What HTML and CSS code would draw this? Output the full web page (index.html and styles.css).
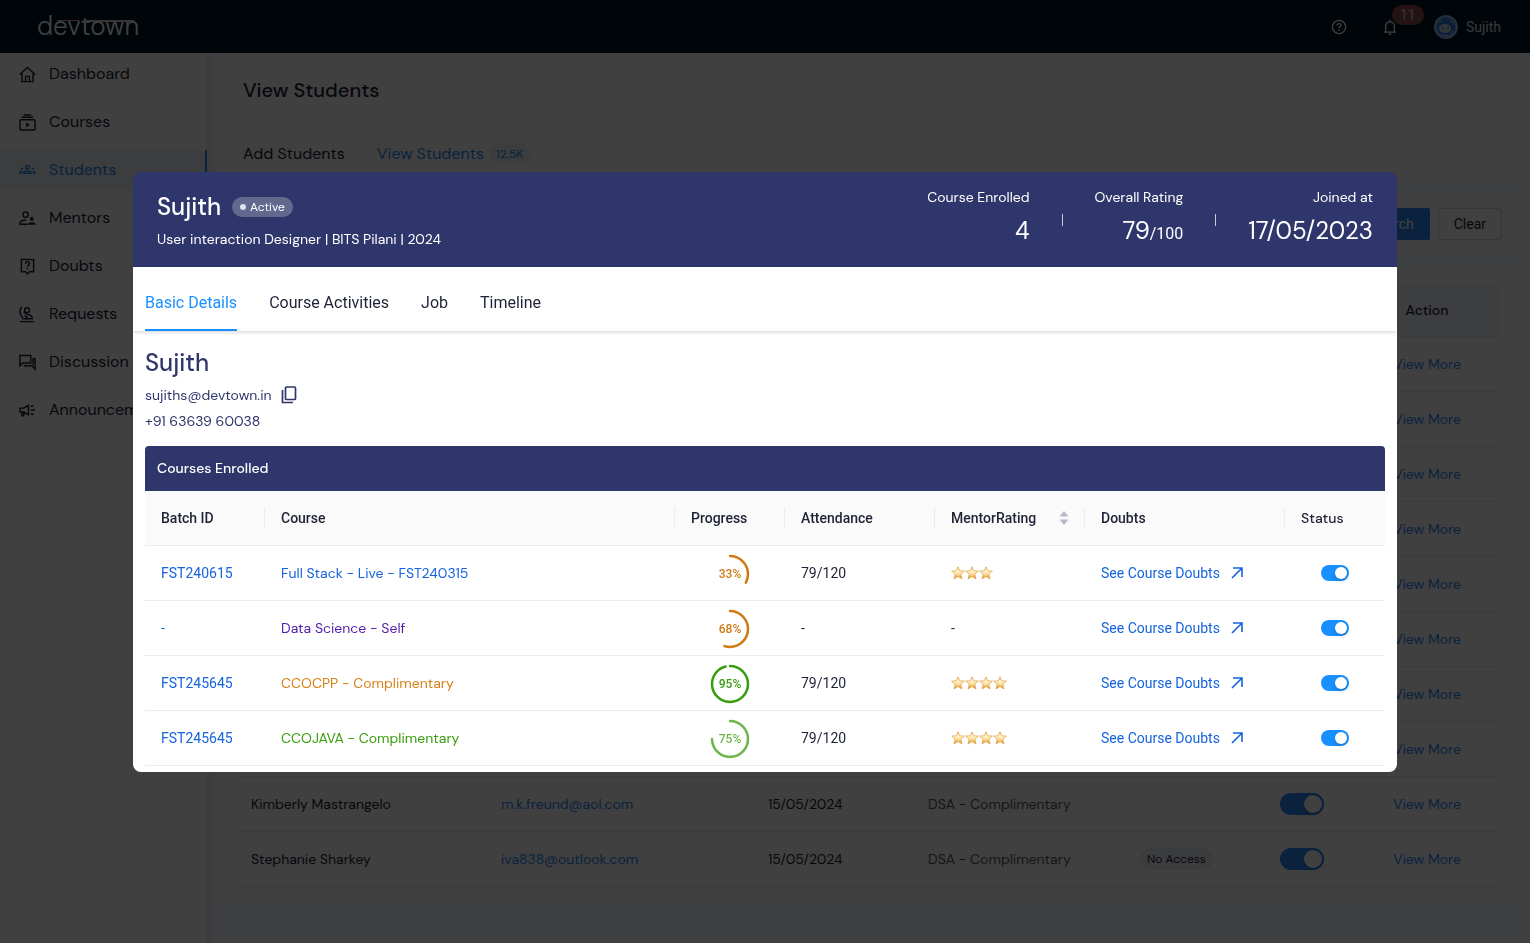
FILE: index.html
```html
<!DOCTYPE html>
<html lang="en">
<head>
    <meta charset="UTF-8" />
    <meta name="viewport" content="width=device-width, initial-scale=1.0" />
    <title>Devtown - View Students</title>
    <link rel="stylesheet" href="styles.css">
</head>
<body>
    <svg class="defs" width="0" height="0" aria-hidden="true">
        <defs>
            <linearGradient id="gold" x1="0" y1="0" x2="0" y2="1">
                <stop offset="0" stop-color="#f0b24a" />
                <stop offset="0.3" stop-color="#fff6dc" />
                <stop offset="0.6" stop-color="#fbdf98" />
                <stop offset="1" stop-color="#d98a25" />
            </linearGradient>
            <symbol id="star" viewBox="0 0 14 14">
                <path d="M7 .8l1.700 4 4.700.3-3.600 3 1.200 4.900L7 10.400 3 13l1.200-4.900-3.600-3 4.700-.3z" fill="url(#gold)" stroke="#e0a040" stroke-width=".7" stroke-linejoin="round" />
            </symbol>
            <symbol id="arrow" viewBox="0 0 12 12">
                <path d="M2 1h9v9M11 1L1 11" fill="none" stroke="currentColor" stroke-width="1.600" />
            </symbol>
        </defs>
    </svg>

    <header class="header">
        <a href="#" class="logo">devtown</a>
        <div class="header-right">
            <button type="button" class="icon-btn" aria-label="Help">
                <svg width="16" height="16" viewBox="0 0 16 16" fill="none" stroke="currentColor" stroke-width="1.300"><circle cx="8" cy="8" r="6.600" /><path d="M6 6.500c0-2.600 4-2.600 4 0 0 1.400-2 1.400-2 2.800M8 10.600v1.300" /></svg>
            </button>
            <button type="button" class="icon-btn bell" aria-label="Notifications">
                <svg width="16" height="16" viewBox="0 0 16 16" fill="none" stroke="currentColor" stroke-width="1.300"><path d="M2 13.200h12M3.700 13V7c0-5.500 8.600-5.500 8.600 0v6M8 2.800V.8M6.700 14.500c.5 1 2.100 1 2.600 0" /></svg>
                <span class="count">11</span>
            </button>
            <a href="#" class="user">
                <svg width="24" height="24" viewBox="0 0 24 24"><circle cx="12" cy="12" r="12" fill="#8fb4e6" /><circle cx="12" cy="12" r="9.500" fill="#2f7fe0" /><path d="M5 7l2-1M16 5l3 3M9 20l6 1M19 16l-2 3" stroke="#cfe2fa" /><ellipse cx="11" cy="13.500" rx="6" ry="4.500" fill="#c3d3e8" /><path d="M8 13h2M13 13h2" stroke="#456" /></svg>
                <span>Sujith</span>
            </a>
        </div>
    </header>

    <div class="layout">
        <nav class="sidebar">
            <a href="#" class="nav-item">
                <svg viewBox="0 0 18 18"><path d="M.8 9L9 1.500 17.200 9M3.200 8v8.500h11.600V8M7 16.500V11h4v5.500" /></svg>
                <span>Dashboard</span>
            </a>
            <a href="#" class="nav-item">
                <svg viewBox="0 0 18 18"><rect x="1" y="6" width="16" height="11" rx="1" /><path d="M3 3.500h12M5 1h8" /><path d="M7.500 9v5l4-2.500z" class="solid" /></svg>
                <span>Courses</span>
            </a>
            <a href="#" class="nav-item active">
                <svg viewBox="0 0 18 18"><circle cx="9" cy="5.500" r="1.900" /><path d="M5 12c0-3 8-3 8 0z" /><circle cx="3.300" cy="7" r="1.300" class="solid" /><circle cx="14.700" cy="7" r="1.300" class="solid" /><path d="M0 12.500c0-2.500 1.500-3 3.500-2.800L3 12.500zM18 12.500c0-2.500-1.500-3-3.500-2.800l.5 2.800z" class="solid" /></svg>
                <span>Students</span>
            </a>
            <a href="#" class="nav-item">
                <svg viewBox="0 0 18 18"><circle cx="7" cy="5" r="2.800" /><path d="M9 15H1v-1c0-2 3-3.500 6.500-3.500" /><circle cx="13.500" cy="9.500" r="2" class="solid" /><path d="M9.500 15.500c0-3.500 8-3.500 8 0z" class="solid" /></svg>
                <span>Mentors</span>
            </a>
            <a href="#" class="nav-item">
                <svg viewBox="0 0 18 18"><path d="M2.500 1.500h13v13H11L9 16.800l-2-2.300H2.500z" /><path d="M7 6c0-2.600 4-2.600 4 0 0 1.500-2 1.500-2 3.200M9 10.600v1.600" /></svg>
                <span>Doubts</span>
            </a>
            <a href="#" class="nav-item">
                <svg viewBox="0 0 18 18"><circle cx="8.500" cy="4.500" r="2.600" /><path d="M3 1C0 4 1 9 4.500 13.500H14c0-3-2-4.500-5.500-4.500L5 6M6 10l4 3.500M1 16.500h15" /></svg>
                <span>Requests</span>
            </a>
            <a href="#" class="nav-item">
                <svg viewBox="0 0 18 18"><path d="M1 1.500h11.500v8H4L1 12.500zM5 12.500h9l3 3.500V5h-2v6.500" /></svg>
                <span>Discussion</span>
            </a>
            <a href="#" class="nav-item">
                <svg viewBox="0 0 18 18"><path d="M1 6.500h4l5-3v10l-5-3H1zM3 10.500v4h2v-4M12.500 8.500H17M12.500 5L15.500 3.500M12.500 12l3 1.500" /></svg>
                <span>Announcements</span>
            </a>
        </nav>

        <main class="main">
            <section class="page-head">
                <h1>View Students</h1>
                <div class="page-tabs">
                    <a href="#">Add Students</a>
                    <a href="#" class="active">View Students <span class="total">12.5K</span></a>
                </div>
            </section>
            <section class="card filters">
                <button type="button" class="btn btn-primary">Search</button>
                <button type="button" class="btn">Clear</button>
            </section>
            <section class="card">
                <table class="students">
                    <colgroup>
                        <col><col class="w-email"><col class="w-date"><col class="w-course"><col class="w-access"><col class="w-status"><col class="w-action">
                    </colgroup>
                    <thead>
                        <tr><th></th><th></th><th></th><th></th><th></th><th></th><th>Action</th></tr>
                    </thead>
                    <tbody>
                        <tr><td colspan="6"></td><td><a href="#">View More</a></td></tr>
                        <tr><td colspan="6"></td><td><a href="#">View More</a></td></tr>
                        <tr><td colspan="6"></td><td><a href="#">View More</a></td></tr>
                        <tr><td colspan="6"></td><td><a href="#">View More</a></td></tr>
                        <tr><td colspan="6"></td><td><a href="#">View More</a></td></tr>
                        <tr><td colspan="6"></td><td><a href="#">View More</a></td></tr>
                        <tr><td colspan="6"></td><td><a href="#">View More</a></td></tr>
                        <tr><td colspan="6"></td><td><a href="#">View More</a></td></tr>
                        <tr>
                            <td>Kimberly Mastrangelo</td>
                            <td><a href="#">m.k.freund@aol.com</a></td>
                            <td>15/05/2024</td>
                            <td class="muted">DSA - Complimentary</td>
                            <td></td>
                            <td><input type="checkbox" class="switch" aria-label="Kimberly Mastrangelo status" checked></td>
                            <td><a href="#">View More</a></td>
                        </tr>
                        <tr>
                            <td>Stephanie Sharkey</td>
                            <td><a href="#">iva838@outlook.com</a></td>
                            <td>15/05/2024</td>
                            <td class="muted">DSA - Complimentary</td>
                            <td><span class="access">No Access</span></td>
                            <td><input type="checkbox" class="switch" aria-label="Stephanie Sharkey status" checked></td>
                            <td><a href="#">View More</a></td>
                        </tr>
                    </tbody>
                </table>
            </section>
        </main>
    </div>

    <div class="overlay">
        <div class="modal" role="dialog" aria-modal="true" aria-labelledby="studentName">
            <div class="modal-header">
                <div class="student">
                    <div class="student-title">
                        <h2 id="studentName">Sujith</h2>
                        <span class="badge">Active</span>
                    </div>
                    <p>User interaction Designer | BITS Pilani | 2024</p>
                </div>
                <div class="stats">
                    <div class="stat"><span>Course Enrolled</span><strong>4</strong></div>
                    <div class="divider"></div>
                    <div class="stat"><span>Overall Rating</span><strong>79<small>/100</small></strong></div>
                    <div class="divider"></div>
                    <div class="stat"><span>Joined at</span><strong>17/05/2023</strong></div>
                </div>
            </div>

            <div class="tabs" role="tablist">
                <button type="button" role="tab" class="tab active" aria-selected="true">Basic Details</button>
                <button type="button" role="tab" class="tab">Course Activities</button>
                <button type="button" role="tab" class="tab">Job</button>
                <button type="button" role="tab" class="tab">Timeline</button>
            </div>

            <div class="modal-body">
                <div class="contact">
                    <h2>Sujith</h2>
                    <div class="email">
                        <span>sujiths@devtown.in</span>
                        <button type="button" class="copy-btn" aria-label="Copy email">
                            <svg width="16" height="18" viewBox="0 0 16 18" fill="none" stroke="currentColor" stroke-width="1.700"><rect x="4.500" y="1" width="10" height="12.500" rx="1" /><path d="M1.500 4v12.500H12" /></svg>
                        </button>
                    </div>
                    <p>+91 63639 60038</p>
                </div>

                <h3 class="table-title">Courses Enrolled</h3>
                <table class="courses">
                    <colgroup>
                        <col class="c-batch"><col><col class="c-progress"><col class="c-mid"><col class="c-mid"><col class="c-doubts"><col class="c-status">
                    </colgroup>
                    <thead>
                        <tr>
                            <th>Batch ID</th>
                            <th>Course</th>
                            <th>Progress</th>
                            <th>Attendance</th>
                            <th>
                                <div class="sortable">MentorRating
                                    <svg width="10" height="14" viewBox="0 0 10 14"><path d="M5 0l4.500 5.500h-9zM5 14L.5 8.500h9z" fill="#b6b8c6" /></svg>
                                </div>
                            </th>
                            <th>Doubts</th>
                            <th>Status</th>
                        </tr>
                    </thead>
                    <tbody>
                        <tr>
                            <td><a href="#">FST240615</a></td>
                            <td class="name live">Full Stack - Live - FST240315</td>
                            <td><div class="ring orange"><svg viewBox="0 0 40 40"><circle cx="20" cy="20" r="18" pathLength="100" stroke-dasharray="33 100" /></svg><span>33%</span></div></td>
                            <td>79/120</td>
                            <td><div class="stars"><svg><use href="#star" /></svg><svg><use href="#star" /></svg><svg><use href="#star" /></svg></div></td>
                            <td><a href="#" class="doubts">See Course Doubts <svg><use href="#arrow" /></svg></a></td>
                            <td><input type="checkbox" class="switch small" aria-label="Full Stack status" checked></td>
                        </tr>
                        <tr>
                            <td><a href="#">-</a></td>
                            <td class="name self">Data Science - Self</td>
                            <td><div class="ring orange"><svg viewBox="0 0 40 40"><circle cx="20" cy="20" r="18" pathLength="100" stroke-dasharray="55 100" /></svg><span>68%</span></div></td>
                            <td>-</td>
                            <td>-</td>
                            <td><a href="#" class="doubts">See Course Doubts <svg><use href="#arrow" /></svg></a></td>
                            <td><input type="checkbox" class="switch small" aria-label="Data Science status" checked></td>
                        </tr>
                        <tr>
                            <td><a href="#">FST245645</a></td>
                            <td class="name cpp">CCOCPP - Complimentary</td>
                            <td><div class="ring green"><svg viewBox="0 0 40 40"><circle cx="20" cy="20" r="18" pathLength="100" stroke-dasharray="96 100" /></svg><span>95%</span></div></td>
                            <td>79/120</td>
                            <td><div class="stars"><svg><use href="#star" /></svg><svg><use href="#star" /></svg><svg><use href="#star" /></svg><svg><use href="#star" /></svg></div></td>
                            <td><a href="#" class="doubts">See Course Doubts <svg><use href="#arrow" /></svg></a></td>
                            <td><input type="checkbox" class="switch small" aria-label="CCOCPP status" checked></td>
                        </tr>
                        <tr>
                            <td><a href="#">FST245645</a></td>
                            <td class="name java">CCOJAVA - Complimentary</td>
                            <td><div class="ring lime"><svg viewBox="0 0 40 40"><circle cx="20" cy="20" r="18" pathLength="100" stroke-dasharray="75 100" /></svg><span>75%</span></div></td>
                            <td>79/120</td>
                            <td><div class="stars"><svg><use href="#star" /></svg><svg><use href="#star" /></svg><svg><use href="#star" /></svg><svg><use href="#star" /></svg></div></td>
                            <td><a href="#" class="doubts">See Course Doubts <svg><use href="#arrow" /></svg></a></td>
                            <td><input type="checkbox" class="switch small" aria-label="CCOJAVA status" checked></td>
                        </tr>
                    </tbody>
                </table>
            </div>
        </div>
    </div>
</body>
</html>
```
FILE: styles.css
```css
* {
    box-sizing: border-box;
}
body {
    margin: 0;
    min-height: 100vh;
    display: flex;
    flex-direction: column;
    font-family: 'DM Sans', Inter, sans-serif;
    font-size: 14px;
    line-height: 20px;
    color: #1e2235;
    background: #f7f9fd;
}
h1, h2, h3, p {
    margin: 0;
    font-weight: 500;
}
a {
    color: #2b87f5;
    text-decoration: none;
}
button {
    font: inherit;
    color: inherit;
    cursor: pointer;
}
.defs {
    position: absolute;
}

/* Top bar */
.header {
    display: flex;
    justify-content: space-between;
    align-items: center;
    height: 53px;
    padding: 0 29px 0 37px;
    background: #001529;
    color: #fff;
}
.logo {
    position: relative;
    font-weight: 300;
    font-size: 26px;
    line-height: 33px;
    color: #fff;
}
.logo::before,
.logo::after {
    content: "";
    position: absolute;
    top: 10px;
    height: 1px;
    background: #e5a0a0;
    left: 20px;
    width: 22px;
}
.logo::after {
    height: 2px;
    background: #e8d0d0;
    left: 46px;
    width: 51px;
}
.header-right {
    display: flex;
    align-items: center;
}
.icon-btn {
    position: relative;
    display: flex;
    padding: 0;
    border: none;
    background: none;
    margin-right: 35px;
}
.icon-btn.bell {
    margin-right: 36px;
}
.count {
    position: absolute;
    left: 10px;
    top: -14px;
    padding: 0 8px;
    border-radius: 10px;
    background: #8a4c55;
    color: #d8c8ca;
    font-family: Roboto, sans-serif;
}
.user {
    display: flex;
    align-items: center;
    gap: 8px;
    color: #e0e0e0;
    font-family: Roboto, sans-serif;
}

/* Sidebar */
.layout {
    display: flex;
    flex: 1;
}
.sidebar {
    width: 207px;
    flex-shrink: 0;
    padding-top: 1px;
    background: #fff;
    box-shadow: 2px 0 4px rgba(0, 20, 60, 0.08);
}
.nav-item {
    display: flex;
    align-items: center;
    gap: 13px;
    height: 40px;
    margin-bottom: 8px;
    padding-left: 19px;
    font-size: 16px;
    color: #1e2235;
}
.nav-item svg {
    width: 17px;
    height: 17px;
    fill: none;
    stroke: currentColor;
    stroke-width: 1.5;
}
.nav-item .solid {
    fill: currentColor;
    stroke: none;
}
.nav-item.active {
    color: #2b87f5;
    background: #e9f3fc;
    border-right: 2px solid #2b87f5;
}

/* Page behind the modal */
.main {
    flex: 1;
    display: flex;
    flex-direction: column;
    gap: 11px;
    padding: 0 12px;
}
.page-head {
    background: #fff;
    height: 128px;
    padding: 24px 24px 0;
}
.page-head h1 {
    font-size: 20px;
    line-height: 26px;
}
.page-tabs {
    display: flex;
    gap: 32px;
    margin-top: 39px;
    font-size: 16px;
    line-height: 24px;
}
.page-tabs a {
    color: #1e2235;
}
.page-tabs a.active {
    display: flex;
    align-items: center;
    gap: 5px;
    color: #2b87f5;
}
.total {
    padding: 0 7px;
    border-radius: 10px;
    background: #eaf2fb;
    font-size: 12px;
    line-height: 20px;
}
.card {
    background: #fff;
    padding: 16px;
}
.filters {
    display: flex;
    justify-content: flex-end;
    gap: 8px;
}
.btn {
    height: 32px;
    padding: 0 15px;
    border: 1px solid #d9d9d9;
    border-radius: 2px;
    background: #fff;
    font-family: Roboto, sans-serif;
}
.btn-primary {
    background: #2b87f5;
    border-color: #2b87f5;
    color: #fff;
}
table {
    width: 100%;
    border-collapse: separate;
    border-spacing: 0;
    table-layout: fixed;
}
th, td {
    height: 55px;
    padding: 0 16px;
    text-align: left;
    border-bottom: 1px solid #ececee;
}
th {
    font-weight: 500;
}
.students th {
    height: 54px;
    background: #f3f7fd;
}
.students th:last-child,
.students td:last-child {
    text-align: center;
}
.w-email { width: 267px; }
.w-date { width: 160px; }
.w-course { width: 212px; }
.w-access { width: 128px; }
.w-status { width: 100px; }
.w-action { width: 150px; }
.muted {
    color: #55596a;
}
.access {
    display: inline-block;
    padding: 0 7px;
    border-radius: 11px;
    background: #eceef4;
    font-size: 12px;
    line-height: 22px;
}

/* Switch */
.switch {
    appearance: none;
    display: block;
    width: 44px;
    height: 22px;
    margin: 0 auto;
    padding: 2px;
    border-radius: 11px;
    background: #bfbfbf;
    cursor: pointer;
}
.switch::before {
    content: "";
    display: block;
    width: 18px;
    height: 18px;
    border-radius: 50%;
    background: #fff;
    box-shadow: 0 2px 4px rgba(0, 35, 11, 0.2);
}
.switch:checked {
    background: #2b87f5;
}
.switch:checked::before {
    margin-left: auto;
}
.switch.small {
    width: 28px;
    height: 16px;
}
.switch.small:checked {
    background: #1890ff;
}
.switch.small::before {
    width: 12px;
    height: 12px;
}

/* Modal */
.overlay {
    position: fixed;
    inset: 0;
    display: flex;
    justify-content: center;
    align-items: flex-start;
    padding: 172px 24px 0;
    background: rgba(0, 0, 0, 0.75);
}
.modal {
    width: 100%;
    max-width: 1264px;
    overflow: hidden;
    border-radius: 8px;
}
.modal-header {
    display: flex;
    justify-content: space-between;
    padding: 15px 24px 17px;
    background: #2f366c;
    color: #fff;
}
.student-title {
    display: flex;
    align-items: center;
    gap: 11px;
    height: 40px;
}
.student-title h2,
.contact h2 {
    font-size: 24px;
    line-height: 32px;
}
.student p {
    margin-top: 2px;
    font-weight: 400;
}
.badge {
    display: flex;
    align-items: center;
    gap: 4px;
    padding: 0 8px;
    border-radius: 10px;
    background: #63688f;
    font-size: 12px;
    line-height: 20px;
}
.badge::before {
    content: "";
    width: 6px;
    height: 6px;
    border-radius: 50%;
    background: #dfe1ec;
}
.stats {
    display: flex;
    gap: 32px;
}
.stat {
    display: flex;
    flex-direction: column;
    align-items: flex-end;
    gap: 8px;
}
.stat strong {
    font-weight: 400;
    font-size: 24px;
    line-height: 32px;
}
.stat small {
    font-family: Roboto, sans-serif;
    font-size: 16px;
}
.divider {
    width: 1px;
    height: 12px;
    margin-top: 27px;
    background: #c8c9d8;
}
.tabs {
    position: relative;
    display: flex;
    gap: 32px;
    height: 64px;
    padding: 9px 12px 0;
    background: #fff;
    box-shadow: 0 1px 4px rgba(0, 0, 0, 0.18);
}
.tab {
    padding: 0;
    border: none;
    border-bottom: 2px solid transparent;
    background: none;
    font-family: Roboto, sans-serif;
    font-size: 16px;
}
.tab.active {
    color: #1890ff;
    border-color: #1890ff;
}
.modal-body {
    padding: 16px 12px 6px;
    background: #fff;
}
.contact {
    color: #2f366c;
}
.contact p {
    margin-top: 6px;
    margin-bottom: 15px;
    font-weight: 400;
}
.email {
    display: flex;
    align-items: center;
    gap: 9px;
    margin-top: 6px;
}
.copy-btn {
    display: flex;
    padding: 0;
    border: none;
    background: none;
}
.table-title {
    padding: 0 12px;
    border-radius: 4px 4px 0 0;
    background: #2f366c;
    color: #fff;
    font-size: 14px;
    line-height: 45px;
}
.courses {
    font-family: Roboto, sans-serif;
}
.courses a {
    color: #1664e0;
}
.courses th {
    background: #fafafa;
}
/* short rule between the header cells */
.courses th:not(:last-child) {
    background: linear-gradient(#ececee, #ececee) right center / 1px 22px no-repeat #fafafa;
}
.courses th:last-child,
.name {
    font-family: 'DM Sans', Inter, sans-serif;
}
.c-batch { width: 120px; }
.c-progress { width: 110px; }
.c-mid { width: 150px; }
.c-doubts { width: 200px; }
.c-status { width: 100px; }
.sortable {
    display: flex;
    align-items: center;
    justify-content: space-between;
}
.live { color: #1664e0; }
.self { color: #531dab; }
.cpp { color: #d98216; }
.java { color: #389e0d; }
.ring {
    position: relative;
    width: 40px;
    height: 40px;
    margin: 2px auto 0;
    display: flex;
    align-items: center;
    justify-content: center;
    font-size: 12px;
    font-weight: 500;
}
.ring svg {
    position: absolute;
    inset: 0;
    transform: rotate(-90deg);
}
.ring circle {
    fill: none;
    stroke: currentColor;
    stroke-width: 2.5;
    stroke-linecap: round;
}
.orange { color: #d07a14; }
.green { color: #389e0d; }
.lime { color: #6fb54a; }
.stars {
    display: flex;
}
.stars svg {
    width: 14px;
    height: 14px;
}
.doubts {
    display: flex;
    align-items: center;
    gap: 11px;
    white-space: nowrap;
}
.doubts svg {
    width: 12px;
    height: 12px;
}
```
